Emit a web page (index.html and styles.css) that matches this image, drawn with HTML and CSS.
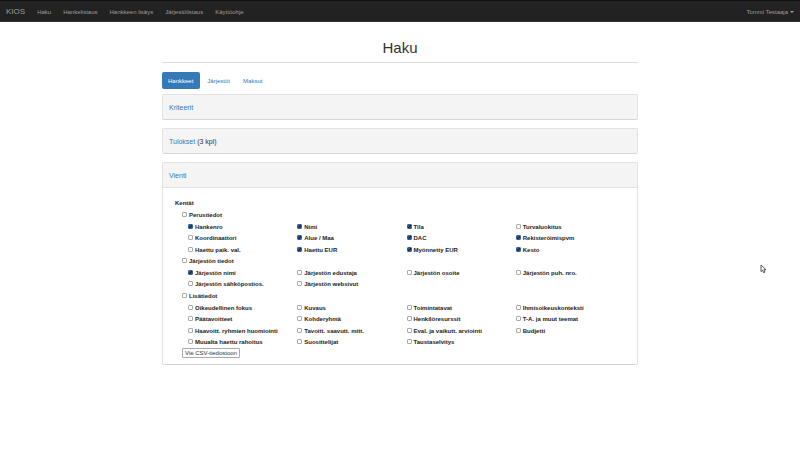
FILE: index.html
```html
<!DOCTYPE html>
<html lang="fi">
<head>
<meta charset="utf-8">
<title>KIOS</title>
<link rel="stylesheet" href="styles.css">
</head>
<body>
<nav class="navbar">
  <a class="brand" href="#">KIOS</a>
  <a href="#">Haku</a>
  <a href="#">Hankelistaus</a>
  <a href="#">Hankkeen lisäys</a>
  <a href="#">Järjestölistaus</a>
  <a href="#">Käyttöohje</a>
  <a class="user" href="#">Tommi Testaaja <span class="caret"></span></a>
</nav>
<main class="container">
  <h1>Haku</h1>
  <nav class="pills">
    <a class="active" href="#">Hankkeet</a>
    <a href="#">Järjestöt</a>
    <a href="#">Maksut</a>
  </nav>
  <section class="panel"><h2><a href="#">Kriteerit</a></h2></section>
  <section class="panel"><h2><a href="#">Tulokset</a> (3 kpl)</h2></section>
  <section class="panel">
    <h2><a href="#">Vienti</a></h2>
    <form class="fields">
      <h3>Kentät</h3>
      <div class="group">
        <label class="all"><input type="checkbox">Perustiedot</label>
        <div class="options">
          <label><input type="checkbox" checked>Hankenro</label>
          <label><input type="checkbox" checked>Nimi</label>
          <label><input type="checkbox" checked>Tila</label>
          <label><input type="checkbox">Turvaluokitus</label>
          <label><input type="checkbox">Koordinaattori</label>
          <label><input type="checkbox" checked>Alue / Maa</label>
          <label><input type="checkbox" checked>DAC</label>
          <label><input type="checkbox" checked>Rekisteröimispvm</label>
          <label><input type="checkbox">Haettu paik. val.</label>
          <label><input type="checkbox" checked>Haettu EUR</label>
          <label><input type="checkbox" checked>Myönnetty EUR</label>
          <label><input type="checkbox" checked>Kesto</label>
        </div>
      </div>
      <div class="group">
        <label class="all"><input type="checkbox">Järjestön tiedot</label>
        <div class="options">
          <label><input type="checkbox" checked>Järjestön nimi</label>
          <label><input type="checkbox">Järjestön edustaja</label>
          <label><input type="checkbox">Järjestön osoite</label>
          <label><input type="checkbox">Järjestön puh. nro.</label>
          <label><input type="checkbox">Järjestön sähköpostios.</label>
          <label><input type="checkbox">Järjestön websivut</label>
        </div>
      </div>
      <div class="group">
        <label class="all"><input type="checkbox">Lisätiedot</label>
        <div class="options">
          <label><input type="checkbox">Oikeudellinen fokus</label>
          <label><input type="checkbox">Kuvaus</label>
          <label><input type="checkbox">Toimintatavat</label>
          <label><input type="checkbox">Ihmisoikeuskonteksti</label>
          <label><input type="checkbox">Päätavoitteet</label>
          <label><input type="checkbox">Kohderyhmä</label>
          <label><input type="checkbox">Henkilöresurssit</label>
          <label><input type="checkbox">T-A. ja muut teemat</label>
          <label><input type="checkbox">Haavoitt. ryhmien huomiointi</label>
          <label><input type="checkbox">Tavoitt. saavutt. mitt.</label>
          <label><input type="checkbox">Eval. ja vaikutt. arviointi</label>
          <label><input type="checkbox">Budjetti</label>
          <label><input type="checkbox">Muualta haettu rahoitus</label>
          <label><input type="checkbox">Suosittelijat</label>
          <label><input type="checkbox">Taustaselvitys</label>
        </div>
      </div>
      <button type="button">Vie CSV-tiedostoon</button>
    </form>
  </section>
</main>
<svg class="pointer" width="7" height="10" viewBox="0 0 7 10" aria-hidden="true"><path d="M1 1v6.6l1.6-1.4 1.1 2.5 1.3-.6-1.1-2.4H6z" fill="#fff" stroke="#444" stroke-width=".9"/></svg>
</body>
</html>
```
FILE: styles.css
```css
* { box-sizing: border-box; }
body {
  margin: 0;
  background: #fff;
  color: #333;
  font: 6px/12px "Liberation Sans", Arial, sans-serif;
}
a { color: #337ab7; text-decoration: none; }
h1, h2, h3 { margin: 0; }

.navbar {
  display: flex;
  align-items: center;
  gap: 12px;
  height: 22px;
  padding: 1px 6px 0;
  background: #222;
  border-top: 1px solid #101010;
  border-bottom: 1px solid #333;
}
.navbar a { color: #9d9d9d; }
.navbar .brand { font-size: 8px; }
.navbar .user { display: flex; align-items: center; gap: 2px; margin-left: auto; }
.caret {
  border: 2px solid transparent;
  border-top-color: #9d9d9d;
  border-bottom: 0;
}

.container { max-width: 476px; margin: 0 auto; }
h1 {
  padding: 17px 0 6px;
  border-bottom: 1px solid #ddd;
  font-size: 15px;
  font-weight: 400;
  line-height: 17px;
  text-align: center;
}
.pills { display: flex; gap: 1px; margin: 9px 0 5px; }
.pills a { padding: 3px 6px 2px; border-radius: 2px; line-height: 12px; }
.pills .active { padding-right: 7px; background: #337ab7; color: #fff; }

.panel {
  margin-bottom: 8px;
  border: 1px solid #e2e2e2;
  border-bottom-color: #d6d6d6;
  border-radius: 2px;
}
.panel h2 {
  padding: 7px 6px 5px;
  background: #f4f4f4;
  font-size: 7px;
  font-weight: 400;
  line-height: 12px;
}
.panel h2:not(:last-child) { border-bottom: 1px solid #e2e2e2; }

.fields { padding: 9px 12px 6px; color: #222; }
.fields h3 { font-size: 6px; line-height: 12px; }
.group, .fields button { margin-left: 7px; }
.fields label {
  display: flex;
  align-items: center;
  gap: 2px;
  font-weight: 700;
  white-space: nowrap;
}
.options {
  display: grid;
  grid-template-columns: repeat(4, 1fr);
  grid-auto-rows: 11px 12px;
  margin-left: 6px;
}
input {
  appearance: none;
  width: 5px;
  height: 5px;
  margin: 0 0 1px;
  border: 1px solid #aaa;
  border-radius: 1px;
  background: #fff;
}
input:checked {
  border-color: #3d5f91;
  background: linear-gradient(135deg, #2f568e 40%, #14243d 50%, #2f568e 75%);
}
button {
  display: block;
  height: 10px;
  padding: 0 2px;
  border: 1px solid #aaa;
  border-radius: 1px;
  background: #fff;
  color: #333;
  font: 6px/8px "Liberation Sans", Arial, sans-serif;
}
.pointer { position: absolute; left: 760px; top: 264px; }
```
